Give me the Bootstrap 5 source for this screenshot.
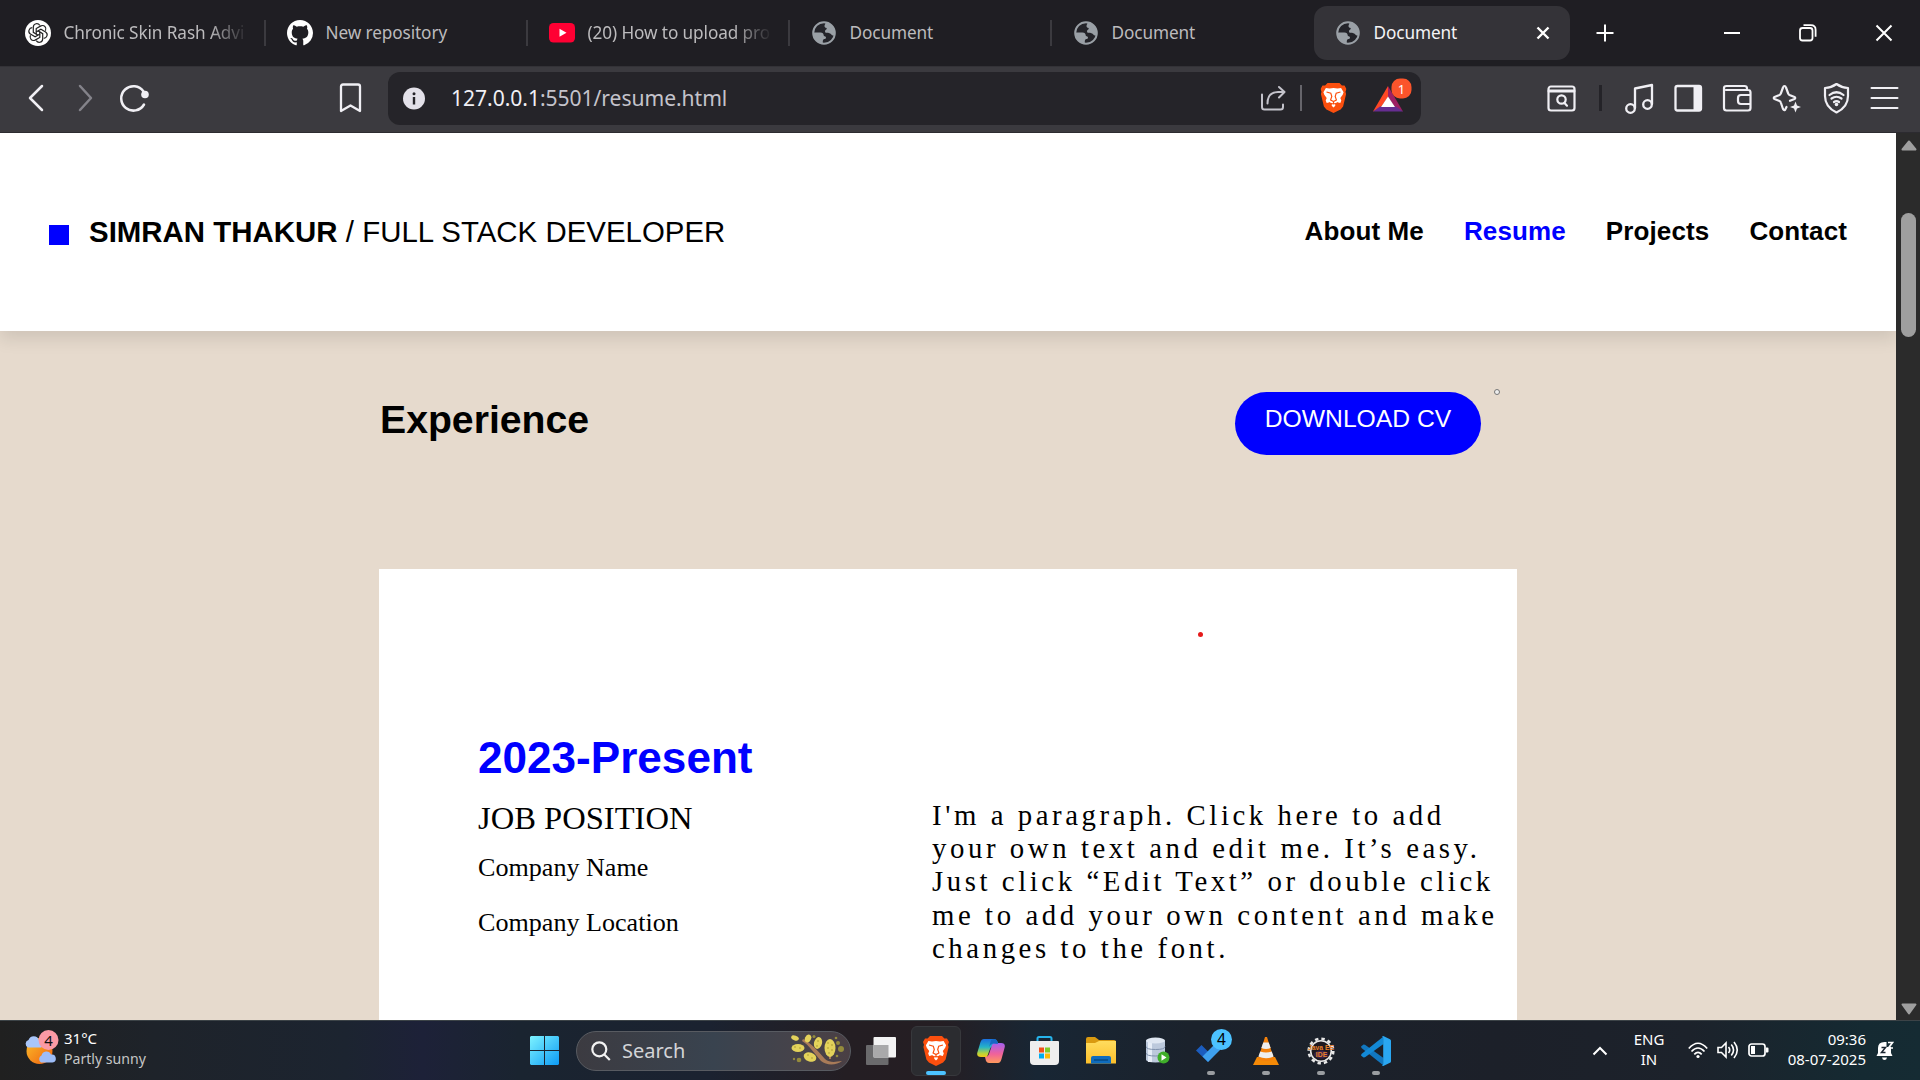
<!DOCTYPE html>
<html lang="en">
<head>
<meta charset="utf-8">
<title>Document</title>
<link href="https://cdn.jsdelivr.net/npm/bootstrap@5.3.0/dist/css/bootstrap.min.css" rel="stylesheet">
<style>
  html, body { height: 1080px; width: 1920px; overflow: hidden; }
  body { background: #1f1e23; font-family: "Noto Sans", "Open Sans", sans-serif; }
  svg { display: block; flex: none; }
  .line { fill: none; stroke: #f0eff4; stroke-width: 2; stroke-linecap: round; stroke-linejoin: round; }
  /* tab strip */
  .tabstrip { height: 66px; background: #1f1e23; font-size: 17.2px; letter-spacing: -.1px; color: #bcbbbd; }
  .btab { width: 262px; height: 54px; padding-left: 22px; gap: 12.5px; border-radius: 13px; white-space: nowrap; position: relative; margin-left: 3px; margin-right: -3px; }
  .btab:not(.nosep)::after { content: ""; position: absolute; right: -.5px; top: 14px; height: 26px; width: 1.5px; background: #3b3a3f; }
  .btab.current { width: 256px; background: #343338; color: #f4f3f6; }
  .tabname { width: 186px; overflow: hidden; }
  .faded { -webkit-mask-image: linear-gradient(90deg, #000 78%, transparent 99%); mask-image: linear-gradient(90deg, #000 78%, transparent 99%); }
  /* toolbar */
  .toolbar { height: 67px; background: #3b3a3f; border-top: 1px solid #333237; border-bottom: 1px solid #2c2b30; padding-bottom: 3px; }
  .tool { width: 49px; }
  .omni { width: 1033px; height: 53px; border-radius: 12px; background: #252429; margin-left: 13px; margin-right: 112px; padding-left: 14px; }
  .omni-url { font-size: 21.1px; letter-spacing: -.05px; color: #c4c3cb; width: 809px; margin-left: 26px; }
  .omni-url b { font-weight: 400; color: #f0eff4; }
  .rule-v { width: 2px; height: 26px; }
  /* page */
  .viewport { height: 887px; overflow: hidden; }
  .site { width: 1896px; background: #e6dacd; font-family: "Liberation Sans", Arial, sans-serif; color: #000; overflow: hidden; position: relative; }
  .site-head { height: 198px; background: #fff; box-shadow: 0 8px 16px rgba(0,0,0,.1); padding: 0 49px 0 49px; }
  .square { width: 20px; height: 20px; background: #00f; margin: 5px 20px 0 0; }
  .brandname { font-size: 29.4px; line-height: 34px; letter-spacing: .03px; }
  .site-nav { gap: 40px; font-size: 26px; line-height: 30px; letter-spacing: .12px; font-weight: 700; margin-top: -2px; }
  .blue { color: #00f; }
  .main-col { width: 1138px; margin: 61px auto 0; }
  .sec-title { font-size: 39.2px; line-height: 46px; font-weight: 700; margin: 5px 0 0 1px; }
  .cv { width: 246px; height: 63px; border-radius: 32px; background: #00f; color: #fff; font-size: 24.7px; line-height: 29px; padding: 12px 0 0; margin-right: 36px; border: 0; }
  .job { background: #fff; height: 480px; margin-top: 114px; padding: 163px 0 0 99px; font-family: "Liberation Serif", "Times New Roman", serif; }
  .years { font: 700 44.1px/52px "Liberation Sans", Arial, sans-serif; margin-bottom: 15px; }
  .job-left { width: 454px; font-size: 26.1px; line-height: 30px; }
  .pos { font-size: 32.6px; line-height: 38px; margin-bottom: 16px; }
  .about { font-size: 28.8px; line-height: 33.2px; letter-spacing: 3.57px; white-space: nowrap; margin: 0; }
  .reddot { position: absolute; left: 1198px; top: 498.5px; width: 5px; height: 5px; border-radius: 50%; background: #e51a1a; }
  .pointer { position: absolute; left: 1494px; top: 256px; width: 6px; height: 6px; border-radius: 50%; border: 1px solid #777; background: #eee; }
  .scroller { width: 24px; background: #2b2b2b; padding: 7px 0 5px 1px; }
  .thumb { width: 15px; height: 124px; border-radius: 8px; background: #9f9f9f; margin-top: 62px; }
  /* taskbar */
  .taskbar { height: 60px; border-top: 1px solid #3c4347; color: #fff; font-size: 15px; line-height: 20px;
    background: linear-gradient(90deg, #202020 0, #1e232a 8%, #1c2430 18%, #1d2138 22%, #1a2430 27%, #1b2230 37%, #241e23 44%, #251e23 49%, #182634 54%, #1b222c 62%, #1c2029 78%, #1c222b 88%, #152a32 97%, #152b33 100%); }
  .weather { width: 520px; padding-left: 24px; gap: 8px; }
  .soft { color: #c6c6c6; font-size: 14.1px; }
  .lift { padding-bottom: 4px; }
  .search { width: 275px; height: 40px; border-radius: 20px; border: 1px solid #585b61; background: linear-gradient(90deg, #3c3b41, #39434f 50%, #46434a 80%, #4a3f44); font-size: 20px; color: #d3d4d7; padding: 0 3px 0 14px; }
  .app { width: 55px; height: 50px; position: relative; display: flex; align-items: center; justify-content: center; }
  .app.open::after { content: ""; position: absolute; left: 23.5px; bottom: 1px; width: 8px; height: 4px; border-radius: 2px; background: #9a9da1; }
  .app.front::after { left: 17.5px; width: 20px; background: #4cc2ff; }
  .tile { width: 50px; height: 50px; border-radius: 6px; background: #2b2c30; border: 1px solid #37383c; display: flex; align-items: center; justify-content: center; }
  .count { position: absolute; width: 21px; height: 21px; left: 27.5px; top: 3px; border-radius: 50%; background: #4cc2ff; color: #000; text-align: center; font-size: 15.5px; line-height: 21px; }
</style>
<script src="https://cdn.jsdelivr.net/npm/bootstrap@5.3.0/dist/js/bootstrap.bundle.min.js"></script>
</head>
<body>
<svg width="0" height="0" class="position-absolute">
  <defs>
    <linearGradient id="gw" x1="0" y1="0" x2="1" y2="1"><stop stop-color="#7df3ff"/><stop offset="1" stop-color="#0d9bf5"/></linearGradient>
    <linearGradient id="gs" x1="0" y1="0" x2="1" y2="1"><stop stop-color="#fbc02a"/><stop offset="1" stop-color="#f0600f"/></linearGradient>
    <linearGradient id="gf" x1="0" y1="0" x2="0" y2="1"><stop stop-color="#ffdc5e"/><stop offset="1" stop-color="#fcbf2a"/></linearGradient>
    <linearGradient id="c1" x1="0" y1="0" x2="0" y2="1"><stop stop-color="#1a6fe0"/><stop offset=".45" stop-color="#25b4c8"/><stop offset=".8" stop-color="#b8d43a"/><stop offset="1" stop-color="#f3c818"/></linearGradient>
    <linearGradient id="c2" x1="0" y1="0" x2="0" y2="1"><stop stop-color="#a35ff0"/><stop offset=".55" stop-color="#f0629a"/><stop offset="1" stop-color="#ff9a5c"/></linearGradient>
    <symbol id="globe" viewBox="0 0 24 24"><circle cx="12" cy="12" r="10.800" fill="#24242a" stroke="#9aa0a6" stroke-width="2"/><path d="M13.500 1.500C19 2 23 6.500 23 12.500c-.5 1.500-1 2-2 2-1.500 0-1.800-2-3.500-2.300-2-.2-4.500.3-4.500-1.900 0-1.500 1.800-1.500 1.800-2.700 0-1-2.300-.6-2.300-2.600 0-1.500 1-1.500 1-3.500zM1.500 11.500h7c2 0 3.200 1.200 3.200 2.800 0 .8.500 1 1.600 1.200 1 .2 1 2.300-.3 2.400-2 .1-2.300 1-2.200 4.600C5 21.500 1.500 17.500 1.500 11.500z" fill="#9aa0a6"/></symbol>
    <symbol id="lion" viewBox="0 0 26 30"><path d="M7 0h12l2.400 2.600 2.600-.2 2 3.700-1 2.700.6 2.200-3 12.500-2.500 3L13 30l-7.100-3.500-2.500-3L.4 11 1 8.800 0 6.100l2-3.700 2.600.2z" fill="#fb4f0e"/><path d="M13 5l4 .6 3.600-.7 2.500 4.300-.9 2.500-2.400 3.300 1 2.600-1 2.500-3.100-.8-2.100 2 .2 1.400L13 24.600l-1.800-1.900.2-1.400-2.100-2-3.100.8-1-2.500 1-2.600-2.400-3.300-.9-2.500L5.400 4.900l3.600.7z" fill="#fff"/><path d="M6 9l4.300 1.200 1 3.300-1.200 3.400L13 18.600l2.900-1.700-1.200-3.400 1-3.300L20 9M13 18.600v2.200M8.500 20l4.500 1 4.500-1" fill="none" stroke="#fb4f0e" stroke-width="1.200"/></symbol>
  </defs>
</svg>

<div class="tabstrip d-flex align-items-center">
  <div class="btab d-flex align-items-center">
    <svg width="26" height="26" viewBox="0 0 26 26"><circle cx="13" cy="13" r="13" fill="#fff"/><g fill="none" stroke="#222" stroke-width="1.200"><path id="petal" d="M11.200 14.200V8.600l4.700-2.700c3.400-1.500 6 2 4.600 4.800"/><use href="#petal" transform="rotate(60 13 13)"/><use href="#petal" transform="rotate(120 13 13)"/><use href="#petal" transform="rotate(180 13 13)"/><use href="#petal" transform="rotate(240 13 13)"/><use href="#petal" transform="rotate(300 13 13)"/></g></svg>
    <div class="tabname faded">Chronic Skin Rash Advi</div>
  </div>
  <div class="btab d-flex align-items-center">
    <svg width="26" height="26" viewBox="0 0 16 16" fill="#fff"><path d="M8 0C3.580 0 0 3.580 0 8c0 3.540 2.290 6.530 5.470 7.590.4.070.55-.17.55-.38 0-.19-.01-.82-.01-1.490-2.010.37-2.530-.49-2.690-.94-.09-.23-.48-.94-.82-1.130-.28-.15-.68-.52-.01-.53.63-.01 1.080.58 1.230.82.72 1.210 1.870.87 2.330.66.070-.52.280-.87.510-1.070-1.780-.2-3.640-.89-3.640-3.950 0-.87.310-1.590.82-2.150-.08-.2-.36-1.020.080-2.120 0 0 .67-.21 2.200.82.64-.18 1.320-.27 2-.27s1.360.090 2 .27c1.530-1.040 2.200-.82 2.200-.82.440 1.100.160 1.920.080 2.120.51.560.82 1.270.82 2.150 0 3.070-1.870 3.750-3.650 3.950.29.250.54.730.54 1.480 0 1.070-.01 1.930-.01 2.200 0 .21.150.46.55.38A8 8 0 0 0 16 8c0-4.420-3.580-8-8-8z"/></svg>
    <div class="tabname">New repository</div>
  </div>
  <div class="btab d-flex align-items-center">
    <svg width="26" height="20" viewBox="0 0 26 20"><rect width="26" height="19.500" rx="4.500" fill="#ff0033"/><path d="M10.500 5.800v8l7-4z" fill="#fff"/></svg>
    <div class="tabname faded">(20) How to upload pro</div>
  </div>
  <div class="btab d-flex align-items-center">
    <svg width="26" height="26" viewBox="0 0 26 26"><use href="#globe" x="1" y="1" width="24" height="24"/></svg>
    <div class="tabname">Document</div>
  </div>
  <div class="btab nosep d-flex align-items-center">
    <svg width="26" height="26" viewBox="0 0 26 26"><use href="#globe" x="1" y="1" width="24" height="24"/></svg>
    <div class="tabname">Document</div>
  </div>
  <div class="btab nosep current d-flex align-items-center ms-1">
    <svg width="26" height="26" viewBox="0 0 26 26"><use href="#globe" x="0" y="1" width="24" height="24"/></svg>
    <div class="tabname w-auto flex-grow-1" style="margin-left:-1px">Document</div>
    <svg class="me-3" width="22" height="22" viewBox="0 0 22 22"><path d="M5.500 5.500l11 11m0-11l-11 11" stroke="#fff" stroke-width="2.400"/></svg>
  </div>
  <svg class="ms-4" style="padding-left:4px" width="24" height="20" viewBox="0 0 20 20"><path d="M10 1.500v17M1.500 10h17" stroke="#fff" stroke-width="2"/></svg>
  <div class="d-flex align-items-center ms-auto gap-5" style="padding-right:26px">
    <svg class="me-2" width="20" height="20" viewBox="0 0 20 20"><path d="M2 10h16" stroke="#fff" stroke-width="2"/></svg>
    <svg class="me-2" width="20" height="20" viewBox="0 0 20 20" fill="none" stroke="#fff" stroke-width="1.800"><rect x="2" y="5" width="12.500" height="12.500" rx="2.500"/><path d="M5.500 2.200h7.300c3 0 4.800 1.800 4.800 4.600v7"/></svg>
    <svg width="20" height="20" viewBox="0 0 20 20"><path d="M2.500 2.500l15 15m0-15l-15 15" stroke="#fff" stroke-width="2"/></svg>
  </div>
</div>

<div class="toolbar d-flex align-items-center ps-3">
  <svg width="40" height="28" viewBox="0 0 40 28"><path class="line" style="stroke-width:2.500" d="M26 2L14 14l12 12"/></svg>
  <svg class="ms-2" width="40" height="28" viewBox="0 0 40 28"><path class="line" style="stroke:#84838a;stroke-width:2.500" d="M16 2l11 12-11 12"/></svg>
  <svg class="ms-2" width="44" height="32" viewBox="0 0 44 32"><path class="line" style="stroke-width:2.500" d="M32 22.500A12.200 12.200 0 1 1 31.500 9.500"/><circle cx="33" cy="12.500" r="3.800" fill="#f0eff4"/></svg>
  <svg style="margin-left:178px" width="41" height="32" viewBox="0 0 41 32"><path class="line" style="stroke-width:2.300" d="M7 4.500q0-2 2-2h15q2 0 2 2v24.500l-9.500-5.500L7 29z"/></svg>
  <div class="omni d-flex align-items-center">
    <svg width="23" height="24" viewBox="0 0 23 24"><circle cx="12" cy="12.500" r="11" fill="#e3e1e9"/><path d="M12 11v7.500" stroke="#252429" stroke-width="2.400"/><circle cx="12" cy="7.700" r="1.500" fill="#252429"/></svg>
    <div class="omni-url"><b>127.0.0.1</b>:5501/resume.html</div>
    <svg width="27" height="28" viewBox="0 0 27 28"><path class="line" style="stroke:#c4c3cb" d="M2 10.500v12.500q0 2.500 2.500 2.500h16q2.500 0 2.500-2.500v-2.500M7.500 19.500C7.500 12 11 8 18 8h6M19 3l5.500 5-5.500 5.500"/></svg>
    <div class="rule-v" style="background:#66656b;margin:0 18px 0 13px"></div>
    <svg width="27" height="30" viewBox="0 0 26 30"><use href="#lion"/></svg>
    <svg style="margin-left:25px" width="42" height="42" viewBox="0 0 42 42"><path d="M16 9L1 34.500l7-3L16 20z" fill="#ff4724"/><path d="M16 9l15 25.500-7-3L16 20z" fill="#9e1f63"/><path d="M1 34.500h30l-7-5H8z" fill="#662d91"/><path d="M16 19.500L9 30h14z" fill="#fff"/><rect x="19.500" y="1.500" width="20" height="20" rx="8.500" fill="#fb542b"/><text x="29.500" y="16.500" font-size="13" text-anchor="middle" fill="#fff">1</text></svg>
  </div>
  <svg width="54" height="30" viewBox="0 0 54 30"><g class="line" style="stroke-width:2.200"><rect x="15.500" y="3.500" width="26" height="24" rx="2.500"/><path d="M16 8h25" style="stroke-width:3"/><circle cx="28.500" cy="16.500" r="4.200"/><path d="M31.500 20l2.500 2.700"/></g></svg>
  <div class="rule-v" style="background:#242328;width:3px;margin-left:12px"></div>
  <div class="d-flex ms-auto" style="padding-right:11px">
    <svg class="tool" height="32" viewBox="0 0 49 32"><g class="line" style="stroke-width:2.300"><circle cx="15.500" cy="26.500" r="4.300"/><circle cx="32.500" cy="22.500" r="4.300"/><path d="M20 26V6.500L37 3v19"/></g></svg>
    <svg class="tool" height="32" viewBox="0 0 49 32"><rect class="line" style="stroke-width:2.300" x="11.500" y="4" width="25.500" height="24.500" rx="2"/><path d="M29.500 4H37v24h-7.500z" fill="#f0eff4"/></svg>
    <svg class="tool" height="32" viewBox="0 0 49 32"><g class="line" style="stroke-width:2.200"><path d="M34 8V6.500q0-2.500-2.500-2.500H13.500Q11 4 11 6v20q0 2.500 2.500 2.500h21.500q2.500 0 2.500-2.500V10.500Q37.500 8 35 8H13M37 13h-9q-3 0-3 3v3q0 3 3 3h9"/></g></svg>
    <svg class="tool" height="32" viewBox="0 0 49 32"><path class="line" style="stroke-width:2.200" d="M24.500 25l-1.500 3q-1.200.5-2-1l-2.200-6.500q-.3-1-1.300-1.500l-5-2q-1.500-1 0-2l5-2q1-.5 1.300-1.500l2.200-6q.5-1.500 1.500-1.500t1.500 1.500l2.200 6q.3 1 1.300 1.500l5 2q1.500 1 0 2l-4.500 1.800"/><path d="M33.500 19.500l1.500 4 4 1.500-4 1.500-1.500 4-1.500-4-4-1.500 4-1.500z" fill="#f0eff4"/></svg>
    <svg class="tool" height="32" viewBox="-1 0 49 32"><g class="line" style="stroke-width:2.200"><path d="M24.500 2q5 3.500 11.500 4v8q0 11-11.500 16.500Q13 25 13 14V6q6.500-.5 11.500-4z"/><path d="M17.500 13q7-5.500 14 0M19.500 16.500q5-3.500 10 0M22 20q2.500-1.800 5 0"/></g><circle cx="24.500" cy="22.500" r="1.800" fill="#f0eff4"/></svg>
    <svg class="tool" height="32" viewBox="0 0 49 32"><path class="line" d="M11.500 6h26M11.500 16h26M11.500 26h26"/></svg>
  </div>
</div>

<div class="viewport d-flex">
  <div class="site">
    <header class="site-head d-flex align-items-center justify-content-between">
      <div class="d-flex align-items-center">
        <div class="square"></div>
        <div class="brandname"><b>SIMRAN THAKUR</b> / FULL STACK DEVELOPER</div>
      </div>
      <nav class="site-nav d-flex"><span>About Me</span><span class="blue">Resume</span><span>Projects</span><span>Contact</span></nav>
    </header>
    <main class="main-col">
      <div class="d-flex align-items-start justify-content-between">
        <h1 class="sec-title">Experience</h1>
        <div class="cv text-center">DOWNLOAD CV</div>
      </div>
      <section class="job">
        <div class="years blue">2023-Present</div>
        <div class="d-flex align-items-start">
          <div class="job-left">
            <div class="pos">JOB POSITION</div>
            <div>Company Name</div>
            <div style="margin-top:25px">Company Location</div>
          </div>
          <p class="about">I'm a paragraph. Click here to add<br>your own text and edit me. It’s easy.<br>Just click “Edit Text” or double click<br>me to add your own content and make<br>changes to the font.</p>
        </div>
      </section>
    </main>
    <div class="reddot"></div>
    <div class="pointer"></div>
  </div>
  <div class="scroller d-flex flex-column align-items-center">
    <svg width="16" height="11" viewBox="0 0 16 11"><path d="M8 1.500L14.500 9.500h-13z" fill="#9f9f9f" stroke="#9f9f9f" stroke-width="2" stroke-linejoin="round"/></svg>
    <div class="thumb"></div>
    <svg class="mt-auto" width="16" height="12" viewBox="0 0 16 12"><path d="M8 10.500L14.500 1.500h-13z" fill="#9f9f9f" stroke="#9f9f9f" stroke-width="2" stroke-linejoin="round"/></svg>
  </div>
</div>

<div class="taskbar d-flex align-items-center">
  <div class="weather d-flex align-items-center">
    <svg width="36" height="44" viewBox="0 0 36 44"><circle cx="15.500" cy="22" r="13" fill="url(#gs)"/><path d="M4 18.500a4 4 0 0 1 .5-7.500 5.500 5.500 0 0 1 10.500 0 4 4 0 0 1 2 7.500z" fill="#a9c6fa"/><path d="M17 33.500a4 4 0 0 1 .5-7 5 5 0 0 1 9.500-1 4 4 0 0 1 1.500 8z" fill="#9dbdf8"/><circle cx="24.500" cy="11" r="10" fill="#fc9aa5"/><text x="24.500" y="16.500" font-size="15" text-anchor="middle" fill="#111">4</text></svg>
    <div class="lift" style="margin-left:-4px">31°C<br><span class="soft">Partly sunny</span></div>
  </div>
  <svg style="margin-left:10px" width="29" height="29" viewBox="0 0 29 29"><path d="M1 0h13v14H0V1zM15 0h13l1 1v13H15zM0 15h14v14H1l-1-1zM15 15h14v13l-1 1H15z" fill="url(#gw)"/></svg>
  <div class="search d-flex align-items-center" style="margin-left:17px;margin-right:2.500px">
    <svg width="20" height="20" viewBox="0 0 20 20" fill="none" stroke="#f2f2f2" stroke-width="2.200"><circle cx="8.300" cy="8.300" r="7"/><path d="M13.300 13.500l5.500 5.500"/></svg>
    <span style="margin-left:11px">Search</span>
    <svg class="ms-auto" width="56" height="34" viewBox="0 0 56 34"><path d="M12 5c8 4 15 12 22 20 5 4 10 3 17 2-5 4-15 5-21 0C24 20 18 11 11 7z" fill="#a97b58"/><path d="M39 25v-5" stroke="#a97b58" stroke-width="2"/><g fill="#e3d25b"><ellipse cx="39" cy="14" rx="5.500" ry="9"/><ellipse cx="27" cy="9" rx="4" ry="6" transform="rotate(15 27 9)"/><ellipse cx="17" cy="4.500" rx="3" ry="4" transform="rotate(25 17 4.500)"/><ellipse cx="4" cy="4" rx="4" ry="2.500" transform="rotate(20 4 4)"/><ellipse cx="7" cy="14" rx="6.500" ry="4"/><ellipse cx="19" cy="23" rx="6.500" ry="4.500" transform="rotate(20 19 23)"/></g><g fill="#a8962f"><circle cx="37" cy="9" r=".8"/><circle cx="41" cy="11" r=".8"/><circle cx="37" cy="14" r=".8"/><circle cx="41" cy="16" r=".8"/><circle cx="38" cy="19" r=".8"/><circle cx="27" cy="7" r=".8"/><circle cx="26" cy="12" r=".8"/><circle cx="4" cy="13" r=".8"/><circle cx="9" cy="14" r=".8"/><circle cx="17" cy="21" r=".8"/><circle cx="21" cy="24" r=".8"/></g><g fill="#958b3c"><circle cx="50" cy="15" r="3"/><circle cx="47" cy="9" r="2"/><circle cx="45" cy="4" r="1.300"/><circle cx="23" cy="2.500" r="1.500"/><circle cx="8" cy="26" r="2.300"/><circle cx="3" cy="25" r="1.200"/><circle cx="46" cy="22" r="1.300"/></g></svg>
  </div>
  <div class="app"><svg width="30" height="28" viewBox="0 0 30 28"><rect x="0" y="8" width="22.500" height="20" rx="1" fill="#6a6a6c"/><rect x="7.500" y="0" width="22.500" height="20.500" rx="1" fill="#f3f3f3"/><path d="M7.500 8h15v12.500h-15z" fill="#a9a9aa"/></svg></div>
  <div class="app open front"><div class="tile"><svg width="26" height="30" viewBox="0 0 26 30"><use href="#lion"/></svg></div></div>
  <div class="app"><svg width="28" height="26" viewBox="0 0 28 26"><path d="M7 1h10q3 0 4 4l1 3h-5q-3 0-4 3l-3 8H4Q-1 19 .5 14L3.500 4Q4.500 1 7 1z" fill="url(#c1)"/><path d="M21 25H12q-2 0-3-2l-1-4q3 0 4-3l3-9q1-2 3-2h6q5 0 3.500 5l-3 11q-1 4-3.500 4z" fill="url(#c2)"/><path d="M17 1q3 0 4 5l-5-.5q-3 .5-4 4L14 2z" fill="#1667c4"/></svg></div>
  <div class="app"><svg class="me-1" width="29" height="30" viewBox="0 0 29 30"><path d="M7.500 6V2.500q0-1.500 1.500-1.500h11q1.500 0 1.500 1.500V6" fill="none" stroke="#26b4ec" stroke-width="2"/><path d="M0 6q0-1 1-1h27q1 0 1 1v19q0 4-4 4H4q-4 0-4-4z" fill="#eee"/><path d="M9 11.500h5v5H9z" fill="#f1511b"/><path d="M15 11.500h5v5h-5z" fill="#80cc28"/><path d="M9 17.500h5v5H9z" fill="#00adef"/><path d="M15 17.500h5v5h-5z" fill="#fbbc09"/></svg></div>
  <div class="app"><svg width="30" height="27" viewBox="0 0 30 27"><path d="M0 2q0-2 2-2h7l4 3h15q2 0 2 2v8H0z" fill="#d99a10"/><path d="M0 6h9l4-2h17v22.500H0z" fill="url(#gf)"/><path d="M5 26.500V21q0-2 2-2h16q2 0 2 2v5.500z" fill="#0f6cbd"/><path d="M8 23h14" stroke="#064a86" stroke-width="1.500"/></svg></div>
  <div class="app"><svg class="ms-1" width="24" height="27" viewBox="0 0 24 27"><path d="M0 3.500v19q0 3 9.500 3t9.500-3v-19z" fill="#bcc9dc"/><path d="M4 5v20" stroke="#e6edf7" stroke-width="4"/><ellipse cx="9.500" cy="3.500" rx="9.500" ry="3" fill="#dfe7f2"/><path d="M0 9.500q0 3 9.500 3t9.500-3M0 16q0 3 9.500 3t9.500-3" fill="none" stroke="#7f91ac" stroke-width="1"/><circle cx="17.500" cy="20.500" r="6" fill="#3fae2a"/><path d="M15.500 17.200v6.600l5-3.300z" fill="#fff"/></svg></div>
  <div class="app open"><svg width="31" height="24" viewBox="0 0 31 24"><path d="M0 11.500l5.500-5.500 11.500 11.500L12 23z" fill="#1b5cbe"/><path d="M12 23l-5.500-5.500L24 0l6 5z" fill="#3ea0ee"/></svg><span class="count">4</span></div>
  <div class="app open"><svg width="26" height="30" viewBox="0 0 26 30"><path d="M4 21h18l4 8H0z" fill="#f58a07"/><path d="M12 1h2l7 22q-8 4-16 0z" fill="#f4810b"/><path d="M10.300 6.500h5.400l2 5.500q-4.700 2-9.400 0zM7.200 15.500q5.800 2 11.600 0l1.800 5q-7.600 3.500-15.200 0z" fill="#eee"/></svg></div>
  <div class="app open"><svg width="30" height="30" viewBox="0 0 30 30"><circle cx="15" cy="15" r="12.300" fill="none" stroke="#e8e8e8" stroke-width="2.600" stroke-dasharray="3.400 3.040"/><circle cx="15" cy="15" r="10.300" fill="#1d1820" stroke="#e8e8e8" stroke-width="1.600"/><ellipse cx="15" cy="18.500" rx="7" ry="4" fill="#38224b"/><g font-family="Liberation Sans, Arial, sans-serif" font-size="6.800" font-weight="700" text-anchor="middle" fill="#e8812a"><text x="15" y="14">Java EE</text><text x="15.500" y="20.500">IDE</text></g></svg></div>
  <div class="app open"><svg width="30" height="30" viewBox="0 0 30 30"><path d="M0 10.500L2.500 8.500 4 8.700 22.500 22v7.500L0.500 12z" fill="#1177c0"/><path d="M0 19.500l2.500 2L4 21.300 22.500 8V.5L.5 18z" fill="#1389d6"/><path d="M21 .3q.8-.5 1.800 0L29 3.200q1 .5 1 1.500v20.600q0 1-1 1.500l-6.200 2.900q-1 .5-1.800 0 1.200-.3 1.200-2V2.300q0-1.700-1.200-2z" fill="#2aa7f2"/></svg></div>

  <div class="d-flex align-items-center ms-auto" style="padding-right:25px">
    <svg style="margin-right:1px" width="16" height="12" viewBox="0 0 16 12"><path d="M1.500 9.500L8 3l6.500 6.500" fill="none" stroke="#fff" stroke-width="2"/></svg>
    <div class="text-center lift" style="width:79px;padding-left:1px">ENG<br>IN</div>
    <svg style="margin-bottom:2px" width="20" height="18" viewBox="0 0 20 18" fill="none" stroke="#fff" stroke-width="1.700"><path d="M.8 7.500Q10-3 19.200 7.500M3.500 10.500q6.500-7 13 0M6.300 13.300q3.700-3.800 7.400 0"/><circle cx="10" cy="15.500" r="1.600" fill="#fff" stroke="none"/></svg>
    <svg style="margin-left:9px;margin-bottom:2px" width="22" height="18" viewBox="0 0 22 18" fill="none" stroke="#fff" stroke-width="1.600"><path d="M1 6.500h3.500L9 2v14l-4.500-4.500H1zM11.500 6q2.500 3 0 6M14.300 3.500q4.500 5.500 0 11M17 1q6.500 8 0 16"/></svg>
    <svg style="margin-left:9px;margin-bottom:2px" width="21" height="14" viewBox="0 0 21 14"><rect x="1" y="1" width="16" height="12" rx="2.500" fill="none" stroke="#fff" stroke-width="1.700"/><path d="M3 3h4v8H3zM18 4.500h1.500q1 0 1 1v3q0 1-1 1H18z" fill="#fff"/></svg>
    <div class="text-end lift" style="width:97px">09:36<br>08-07-2025</div>
    <svg style="margin-left:10px;margin-right:1px" width="18" height="20" viewBox="0 0 18 20"><path d="M2 7q0-6 6.500-6h2v5H15v6l1.500 3H.5L2 12zM6 16.500h5q-.5 2.500-2.500 2.500T6 16.500z" fill="#fff"/><path d="M5.500 6.500h4l-4 5h4" fill="none" stroke="#1a2530" stroke-width="1.500"/><path d="M12 1.500h4.500L12.500 7H17" fill="none" stroke="#fff" stroke-width="1.700"/></svg>
  </div>
</div>
</body>
</html>
